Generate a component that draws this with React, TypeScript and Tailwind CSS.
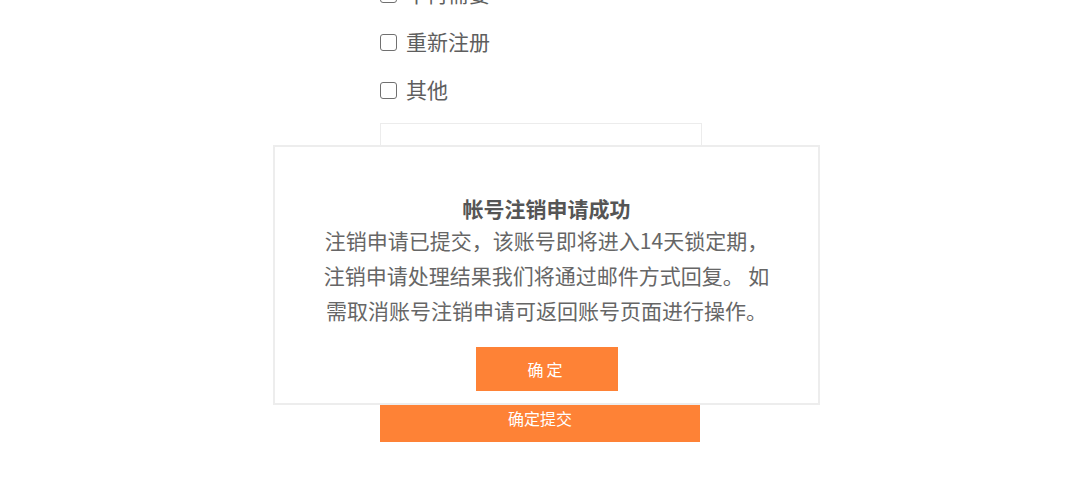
import React from 'react';

const reasons = ['不再需要', '重新注册', '其他'];

const Checkbox = ({ label }: { label: string }) => (
  <label className="flex h-[48px] items-center">
    <span className="mr-[9px] mt-[3px] block h-[17px] w-[17px] shrink-0 rounded-[3px] border-[1.5px] border-[#707070] bg-white" />
    <span className="text-[21px] leading-none text-[#5e5e5e]">{label}</span>
  </label>
);

export default function App() {
  return (
    <div
      className="relative h-[486px] w-[1080px] overflow-hidden bg-white"
      style={{ fontFamily: '"Noto Sans CJK SC", "Noto Sans", sans-serif' }}
    >
      {/* page behind the dialog */}
      <div className="ml-[380px] mt-[-31px] w-[322px]">
        {reasons.map((r) => (
          <Checkbox key={r} label={r} />
        ))}
        <div className="mt-[10px] h-[240px] w-[322px] border border-[#ececec] bg-white" />
        <button className="mt-[33px] flex h-[46px] w-[320px] items-center justify-center bg-[#fe8236] text-[16px] text-white">
          <span className="mt-[-2px]">确定提交</span>
        </button>
      </div>

      {/* dialog */}
      <div className="absolute left-[273px] top-[145px] flex h-[260px] w-[547px] flex-col items-center border-2 border-[#ededed] bg-white pt-[47px]">
        <h2 className="text-[21px] font-bold leading-[29px] text-[#555]">帐号注销申请成功</h2>
        <p className="w-[462px] text-center text-[21px] leading-[35px] text-[#666]">
          注销申请已提交，该账号即将进入14天锁定期，注销申请处理结果我们将通过邮件方式回复。 如需取消账号注销申请可返回账号页面进行操作。
        </p>
        <button className="mt-[19px] flex h-[44px] w-[142px] items-center justify-center bg-[#fe8236] text-[16px] tracking-[3px] text-white">
          确定
        </button>
      </div>
    </div>
  );
}
